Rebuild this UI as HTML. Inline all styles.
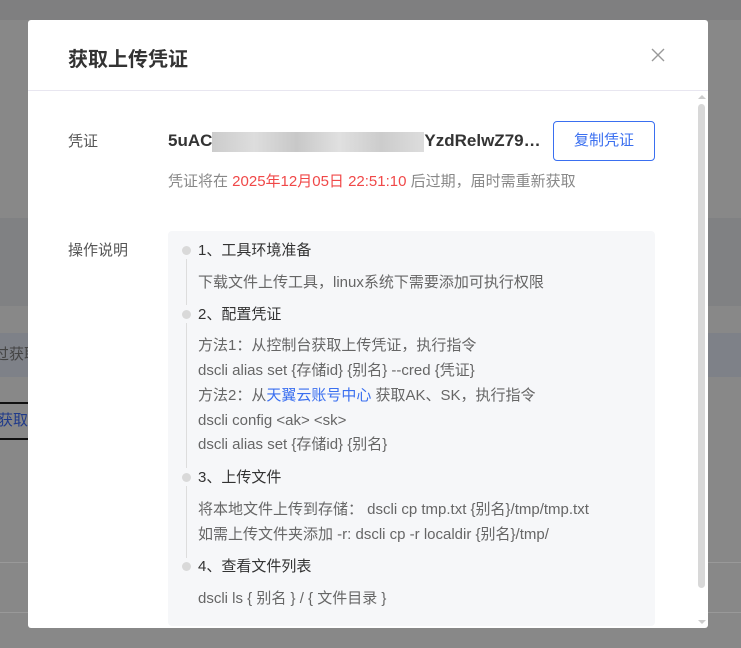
<!DOCTYPE html>
<html><head><meta charset="utf-8"><style>
*{margin:0;padding:0;box-sizing:border-box}
body{width:741px;height:648px;overflow:hidden;background:#888;font-family:"Liberation Sans","Noto Sans CJK SC",sans-serif;position:relative}
.a{position:absolute;white-space:nowrap}
.t{font-size:15px;color:#666;line-height:20px}
.dot{position:absolute;left:182px;width:9px;height:9px;border-radius:50%;background:#d9d9d9}
.ln{position:absolute;left:186px;width:1px;background:#ddd}
</style></head><body>
<div class="a" style="left:0;top:0;width:741px;height:20px;background:#7f7f80"></div>
<div class="a" style="left:0;top:218px;width:741px;height:88px;background:#808183"></div>
<div class="a" style="left:0;top:333px;width:741px;height:44px;background:#7e8188"></div>
<div class="a t" style="left:-6px;top:345px;color:#444">过获取</div>
<div class="a" style="left:0;top:402px;width:28px;height:38px;border-top:2px solid #111;border-bottom:2px solid #111"></div>
<div class="a t" style="left:-2px;top:411px;color:#1f3a8a">获取</div>
<div class="a" style="left:0;top:562px;width:741px;height:1px;background:#999"></div>
<div class="a" style="left:0;top:612px;width:741px;height:1px;background:#999"></div>

<div class="a" style="left:28px;top:20px;width:680px;height:608px;background:#fff;border-radius:3px"></div>
<div class="a" style="left:68px;top:43px;font-size:20px;font-weight:bold;color:#333">获取上传凭证</div>
<svg class="a" style="left:651px;top:48px" width="14" height="14"><path d="M1 1L13 13M13 1L1 13" stroke="#999" stroke-width="1.4"/></svg>
<div class="a" style="left:28px;top:90px;width:680px;height:1px;background:#e8e6f0"></div>
<div class="a" style="left:698px;top:104px;width:7px;height:484px;background:#d8d8d8;border-radius:4px"></div>
<div class="a" style="left:698px;top:95px;width:0;height:0;border:4px solid transparent;border-bottom-color:#ccc;border-top:0"></div>
<div class="a" style="left:698px;top:620px;width:0;height:0;border:4px solid transparent;border-top-color:#ccc;border-bottom:0"></div>

<div class="a t" style="left:68px;top:132px;color:#555">凭证</div>
<div class="a" style="left:168px;top:131px;font-size:17px;font-weight:bold;color:#333">5uAC<span style="display:inline-block;width:212px;height:20px;vertical-align:middle;background:linear-gradient(90deg,#ccc,#ddd,#c8c8c8,#e0e0e0,#ccc,#ddd)"></span>YzdRelwZ79…</div>
<div class="a" style="left:553px;top:121px;width:102px;height:40px;border:1px solid #3a6ff0;border-radius:4px;color:#3a6ff0;font-size:15px;text-align:center;line-height:38px">复制凭证</div>
<div class="a t" style="left:168px;top:172px;color:#888">凭证将在 <span style="color:#f04848">2025年12月05日 22:51:10</span> 后过期，届时需重新获取</div>

<div class="a t" style="left:68px;top:241px;color:#555">操作说明</div>
<div class="a" style="left:168px;top:231px;width:487px;height:395px;background:#f6f7f9;border-radius:4px"></div>
<div class="ln" style="top:259px;height:46px"></div>
<div class="ln" style="top:323px;height:145px"></div>
<div class="ln" style="top:486px;height:72px"></div>
<div class="dot" style="top:246px"></div>
<div class="dot" style="top:310px"></div>
<div class="dot" style="top:473px"></div>
<div class="dot" style="top:562px"></div>
<div class="a t" style="left:198px;top:241px;color:#333">1、工具环境准备</div>
<div class="a t" style="left:198px;top:273px">下载文件上传工具，linux系统下需要添加可执行权限</div>
<div class="a t" style="left:198px;top:305px;color:#333">2、配置凭证</div>
<div class="a t" style="left:198px;top:336px">方法1：从控制台获取上传凭证，执行指令</div>
<div class="a t" style="left:198px;top:361px">dscli alias set {存储id} {别名} --cred {凭证}</div>
<div class="a t" style="left:198px;top:386px">方法2：从<span style="color:#3a6ff0">天翼云账号中心</span> 获取AK、SK，执行指令</div>
<div class="a t" style="left:198px;top:411px">dscli config &lt;ak&gt; &lt;sk&gt;</div>
<div class="a t" style="left:198px;top:435px">dscli alias set {存储id} {别名}</div>
<div class="a t" style="left:198px;top:468px;color:#333">3、上传文件</div>
<div class="a t" style="left:198px;top:500px">将本地文件上传到存储： dscli cp tmp.txt {别名}/tmp/tmp.txt</div>
<div class="a t" style="left:198px;top:525px">如需上传文件夹添加 -r: dscli cp -r localdir {别名}/tmp/</div>
<div class="a t" style="left:198px;top:557px;color:#333">4、查看文件列表</div>
<div class="a t" style="left:198px;top:589px">dscli ls { 别名 } / { 文件目录 }</div>
</body></html>
